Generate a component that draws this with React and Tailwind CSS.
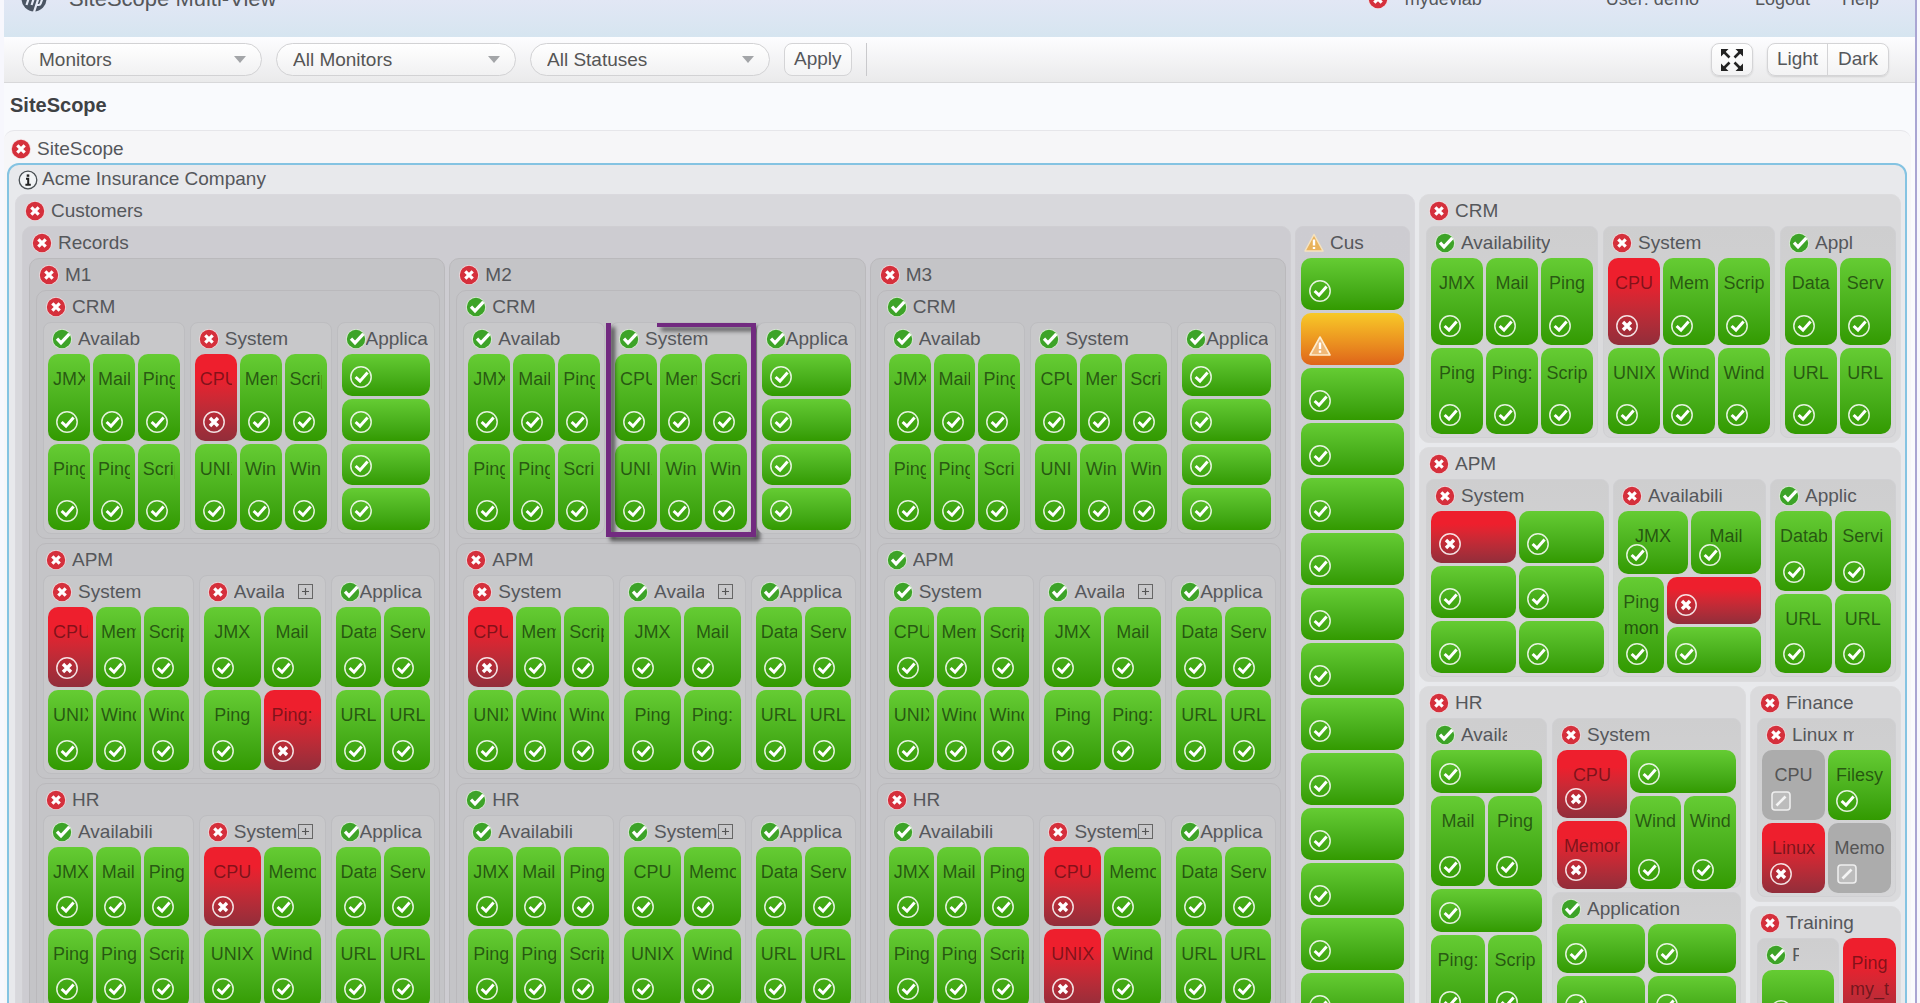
import React from "react";

/* ---------- icons ---------- */

function BadgeError() {
  return (
    <svg viewBox="0 0 20 20" className="size-5 shrink-0" aria-hidden="true">
      <circle cx="10" cy="10" r="10" fill="#f3dcdf" />
      <circle cx="10" cy="10" r="9.2" fill="#d5303c" />
      <path d="M6.3 6.3l7.4 7.4M13.7 6.3l-7.4 7.4" stroke="#fff" strokeWidth="3.2" />
    </svg>
  );
}

function BadgeGood() {
  return (
    <svg viewBox="0 0 20 20" className="size-5 shrink-0" aria-hidden="true">
      <circle cx="10" cy="10" r="10" fill="#dcefd6" />
      <circle cx="10" cy="10" r="9.2" fill="#3da328" />
      <path d="M5 9.6l4 4.2 8.4-9" fill="none" stroke="#fff" strokeWidth="3.2" />
    </svg>
  );
}

function BadgeWarning() {
  return (
    <svg viewBox="0 0 20 20" className="size-5 shrink-0" aria-hidden="true">
      <path d="M10 1.5L19 18H1z" fill="#e9b35c" stroke="#f6e3bf" strokeWidth="1.5" strokeLinejoin="round" />
      <path d="M10 6.5v6M10 14v2" stroke="#fff" strokeWidth="2.4" />
    </svg>
  );
}

function BadgeInfo() {
  return (
    <svg viewBox="0 0 20 20" className="size-5 shrink-0" aria-hidden="true">
      <circle cx="10" cy="10" r="8.8" fill="#f2f4f6" stroke="#4a5054" strokeWidth="1.3" />
      <path d="M10 4.4v2.4" stroke="#222" strokeWidth="2.6" />
      <path d="M8 8.8h2.2v5.4M7.4 14.8h5.4" fill="none" stroke="#222" strokeWidth="2" />
    </svg>
  );
}

const BADGES = { bad: BadgeError, ok: BadgeGood, warn: BadgeWarning, info: BadgeInfo };

function TileIcon({ status }) {
  if (status === "warn") {
    return (
      <svg viewBox="0 0 22 22" className="mt-auto ml-2 size-[22px] shrink-0" aria-hidden="true">
        <path d="M11 2L21 20H1z" fill="#f0b877" stroke="#fdeccd" strokeWidth="1.6" strokeLinejoin="round" />
        <path d="M11 7.5v6.5M11 15.6v2.2" stroke="#fff" strokeWidth="2.4" />
      </svg>
    );
  }
  if (status === "off") {
    return (
      <svg viewBox="0 0 22 22" className="mt-auto ml-2 size-[22px] shrink-0" aria-hidden="true">
        <rect x="2" y="2" width="18" height="18" rx="3" fill="#bcbcbc" stroke="#eee" strokeWidth="1.6" />
        <path d="M6.5 15.5l9-9" stroke="#f4f4f4" strokeWidth="2.6" />
      </svg>
    );
  }
  return (
    <svg viewBox="0 0 22 22" className="mt-auto ml-2 size-[22px] shrink-0" aria-hidden="true">
      <circle cx="11" cy="11" r="10.2" fill="none" stroke="#fff" strokeOpacity="0.85" strokeWidth="1.5" />
      {status === "bad" ? (
        <path d="M7 7l8 8M15 7l-8 8" stroke="#fff" strokeWidth="3.4" />
      ) : (
        <path d="M5.6 11l4.4 4.2 7.6-8.8" fill="none" stroke="#fff" strokeWidth="3" />
      )}
    </svg>
  );
}

/* ---------- monitor tiles ---------- */

const TILE_STYLES = {
  ok: "bg-linear-to-b from-[#65cc33] to-[#329a00] text-black/55",
  bad: "bg-linear-to-b from-[#ee1f2d] from-25% to-[#922d3a] text-black/45",
  warn: "bg-linear-to-b from-[#f7c928] to-[#de641a] text-black/55",
  off: "bg-[#acacac] text-[#555]",
};

function Tile({ label, status = "ok", wrap = false, className = "" }) {
  return (
    <div className={`flex min-h-0 min-w-0 flex-col overflow-hidden rounded-[10px] pb-2 text-lg ${TILE_STYLES[status]} ${className}`}>
      {label && (
        <div className={`mx-[5px] mt-3 overflow-hidden text-center leading-[26px] ${wrap ? "shrink-0" : "whitespace-nowrap"}`}>
          {label}
        </div>
      )}
      <TileIcon status={status} />
    </div>
  );
}

/* A leading "!" in a tile name marks it as failing. */
function tiles(names) {
  return names.map((name, i) => {
    const bad = name.startsWith("!");
    return <Tile key={i} label={bad ? name.slice(1) : name} status={bad ? "bad" : "ok"} />;
  });
}

/* ---------- panels ---------- */

function PanelHeader({ status, title, clip = "", tight = false, expand = false, className = "" }) {
  const Badge = BADGES[status];
  return (
    <div className={`flex h-[31px] items-center ${className}`}>
      <Badge />
      <div className={`overflow-hidden whitespace-nowrap leading-[26px] ${tight ? "" : "ml-[6px]"} ${clip}`}>{title}</div>
      {expand && (
        <button type="button" aria-label={`Expand ${title}`} className="mr-2 ml-auto grid size-[15px] shrink-0 place-items-center border border-[#666]">
          <svg viewBox="0 0 9 9" className="size-[9px]" aria-hidden="true">
            <path d="M4.5 1v7M1 4.5h7" stroke="#555" strokeWidth="1.2" />
          </svg>
        </button>
      )}
    </div>
  );
}

function Panel({ status, title, tone, className = "", children }) {
  return (
    <section className={`min-w-0 rounded-[10px] border pr-1 pb-1 pl-[6px] ${tone} ${className}`}>
      <PanelHeader status={status} title={title} className="pl-[3px]" />
      {children}
    </section>
  );
}

const DEEP = "border-[#bab9bc] bg-[#c4c4c7]";
const DEEP_LEAF = "border-[#bdbdc0] bg-[#c8c8ca]";
const PALE = "border-[#dcdcde] bg-[#dadadc]";
const PALE_LEAF = "border-[#d0d0d3] bg-linear-to-b from-[#cececf] to-[#d6d6d8]";

function Leaf({ status = "ok", title, tone = DEEP_LEAF, clip, tight, expand, body, overlay, className = "", children }) {
  return (
    <section className={`relative min-w-0 rounded-[8px] border px-1 pb-[3px] ${tone} ${className}`}>
      <PanelHeader status={status} title={title} clip={clip} tight={tight} expand={expand} className="pl-1" />
      <div className={`gap-[3px] ${body}`}>{children}</div>
      {overlay}
    </section>
  );
}

function Highlight() {
  return (
    <div className="pointer-events-none absolute top-0 -right-[5px] -bottom-1 -left-[5px] border-[5px] border-t-0 border-[#722a80] drop-shadow-[4px_4px_2px_rgba(0,0,0,0.6)]">
      <div className="absolute -right-[5px] top-0 left-[46px] h-1 bg-[#722a80]" />
    </div>
  );
}

/* ---------- company column (M1, M2, M3) ---------- */

function Company({ name, crm, apm, hr }) {
  return (
    <Panel status="bad" title={name} tone={DEEP}>
      <div className="flex flex-col gap-1">
        <Panel status={crm.status} title="CRM" tone={DEEP}>
          <div className="grid grid-cols-[142fr_142fr_99fr] gap-[5px]">
            <Leaf title="Availab" body="grid h-[176px] auto-rows-fr grid-cols-3">
              {tiles(["JMX", "Mail", "Ping", "Ping", "Ping", "Script"])}
            </Leaf>
            <Leaf
              title="System"
              status={crm.status}
              body="grid h-[176px] auto-rows-fr grid-cols-3"
              overlay={crm.highlight && <Highlight />}
            >
              {tiles([crm.cpu, "Mem", "Script", "UNIX", "Win", "Win"])}
            </Leaf>
            <Leaf title="Applica" tight body="grid h-[176px] auto-rows-fr">
              {tiles(["", "", "", ""])}
            </Leaf>
          </div>
        </Panel>

        <Panel status={apm.status} title="APM" tone={DEEP}>
          <div className="grid grid-cols-[151fr_127fr_105fr] gap-[5px]">
            <Leaf title="System" status={apm.status} body="grid h-[163px] auto-rows-fr grid-cols-3">
              {tiles([apm.cpu, "Mem", "Script", "UNIX", "Wind", "Wind"])}
            </Leaf>
            <Leaf title="Availab" status={apm.avail} clip="w-[50px]" expand body="grid h-[163px] auto-rows-fr grid-cols-2">
              {tiles(["JMX", "Mail", "Ping", apm.ping])}
            </Leaf>
            <Leaf title="Applica" tight body="grid h-[163px] auto-rows-fr grid-cols-2">
              {tiles(["Data", "Serv", "URL", "URL"])}
            </Leaf>
          </div>
        </Panel>

        <Panel status={hr.status} title="HR" tone={DEEP}>
          <div className="grid grid-cols-[151fr_127fr_105fr] gap-[5px]">
            <Leaf title="Availabili" body="grid h-[161px] auto-rows-fr grid-cols-3">
              {tiles(["JMX", "Mail", "Ping", "Ping", "Ping", "Script"])}
            </Leaf>
            <Leaf title="System" status={hr.system} expand body="grid h-[161px] auto-rows-fr grid-cols-2">
              {tiles([hr.cpu, "Memo", hr.unix, "Wind"])}
            </Leaf>
            <Leaf title="Applica" tight body="grid h-[161px] auto-rows-fr grid-cols-2">
              {tiles(["Data", "Serv", "URL", "URL"])}
            </Leaf>
          </div>
        </Panel>
      </div>
    </Panel>
  );
}

const COMPANIES = [
  {
    name: "M1",
    crm: { status: "bad", cpu: "!CPU" },
    apm: { status: "bad", cpu: "!CPU", avail: "bad", ping: "!Ping:" },
    hr: { status: "bad", system: "bad", cpu: "!CPU", unix: "UNIX" },
  },
  {
    name: "M2",
    crm: { status: "ok", cpu: "CPU", highlight: true },
    apm: { status: "bad", cpu: "!CPU", avail: "ok", ping: "Ping:" },
    hr: { status: "ok", system: "ok", cpu: "CPU", unix: "UNIX" },
  },
  {
    name: "M3",
    crm: { status: "ok", cpu: "CPU" },
    apm: { status: "ok", cpu: "CPU", avail: "ok", ping: "Ping:" },
    hr: { status: "bad", system: "bad", cpu: "!CPU", unix: "!UNIX" },
  },
];

/* ---------- right-hand side ---------- */

function SideColumn() {
  return (
    <div className="flex min-w-0 flex-col gap-1">
      <Panel status="bad" title="CRM" tone={PALE}>
        <div className="grid grid-cols-[172fr_172fr_116fr] gap-[5px]">
          <Leaf title="Availability" tone={PALE_LEAF} body="grid h-[176px] auto-rows-fr grid-cols-3">
            {tiles(["JMX", "Mail", "Ping", "Ping", "Ping:", "Scrip"])}
          </Leaf>
          <Leaf title="System" status="bad" tone={PALE_LEAF} body="grid h-[176px] auto-rows-fr grid-cols-3">
            {tiles(["!CPU", "Mem", "Scrip", "UNIX", "Wind", "Wind"])}
          </Leaf>
          <Leaf title="Appl" tone={PALE_LEAF} body="grid h-[176px] auto-rows-fr grid-cols-2">
            {tiles(["Data", "Serv", "URL", "URL"])}
          </Leaf>
        </div>
      </Panel>

      <Panel status="bad" title="APM" tone={PALE}>
        <div className="grid grid-cols-[183fr_153fr_126fr] gap-1">
          <Leaf title="System" status="bad" tone={PALE_LEAF} body="grid h-[162px] auto-rows-fr grid-cols-2">
            <Tile status="bad" />
            {tiles(["", "", "", "", ""])}
          </Leaf>
          <Leaf title="Availabili" status="bad" tone={PALE_LEAF} body="flex h-[162px] flex-col">
            <div className="grid h-[63px] grid-cols-2 gap-[3px]">{tiles(["JMX", "Mail"])}</div>
            <div className="grid flex-1 grid-cols-[46fr_93fr] gap-[3px]">
              <Tile label="Ping mon" wrap />
              <div className="grid auto-rows-fr gap-[3px]">
                <Tile status="bad" />
                <Tile />
              </div>
            </div>
          </Leaf>
          <Leaf title="Applic" tone={PALE_LEAF} body="grid h-[162px] auto-rows-fr grid-cols-2">
            {tiles(["Datab", "Servi", "URL", "URL"])}
          </Leaf>
        </div>
      </Panel>

      <div className="grid grid-cols-[327fr_151fr] gap-1">
        <Panel status="bad" title="HR" tone={PALE}>
          <div className="grid grid-cols-[121fr_189fr] gap-[5px]">
            <Leaf title="Availab" clip="w-[46px]" tone={PALE_LEAF} body="flex flex-col">
              <Tile className="h-[43px]" />
              <div className="grid h-[90px] grid-cols-2 gap-[3px]">{tiles(["Mail", "Ping"])}</div>
              <Tile className="h-[43px]" />
              <div className="grid h-[86px] grid-cols-2 gap-[3px]">{tiles(["Ping:", "Scrip"])}</div>
            </Leaf>
            <div className="flex min-w-0 flex-col gap-1">
              <Leaf title="System" status="bad" tone={PALE_LEAF} body="grid h-[134px] grid-cols-[69fr_105fr]">
                <div className="grid auto-rows-fr gap-[3px]">{tiles(["!CPU", "!Memor"])}</div>
                <div className="flex flex-col gap-[3px]">
                  <Tile className="h-[43px]" />
                  <div className="grid flex-1 grid-cols-2 gap-[3px]">{tiles(["Wind", "Wind"])}</div>
                </div>
              </Leaf>
              <Leaf title="Application" tone={PALE_LEAF} body="grid h-[100px] auto-rows-fr grid-cols-2">
                {tiles(["", "", "", ""])}
              </Leaf>
            </div>
          </div>
        </Panel>

        <div className="flex min-w-0 flex-col gap-1">
          <Panel status="bad" title="Finance" tone={PALE}>
            <Leaf title="Linux m" status="bad" clip="w-[62px]" tone={PALE_LEAF} body="grid h-[143px] auto-rows-fr grid-cols-2">
              <Tile label="CPU" status="off" />
              <Tile label="Filesy" />
              <Tile label="Linux" status="bad" />
              <Tile label="Memo" status="off" />
            </Leaf>
          </Panel>
          <Panel status="bad" title="Training" tone={PALE}>
            <div className="grid grid-cols-[82fr_53fr] gap-1">
              <Leaf title="P" clip="w-[7px]" tone={PALE_LEAF} body="grid">
                <Tile className="h-[60px]" />
              </Leaf>
              <Tile label="Ping my_t" status="bad" wrap />
            </div>
          </Panel>
        </div>
      </div>
    </div>
  );
}

/* ---------- page chrome ---------- */

function Dropdown({ label }) {
  return (
    <div className="relative">
      <select
        aria-label={label}
        className="h-[33px] w-60 appearance-none rounded-full border border-[#d2d2d4] bg-linear-to-b from-white to-[#f1f1f2] pr-10 pl-4 text-[19px] leading-[26px] text-[#555]"
      >
        <option>{label}</option>
      </select>
      <svg viewBox="0 0 12 7" className="pointer-events-none absolute top-[13px] right-4 h-[7px] w-3" aria-hidden="true">
        <path d="M0 0h12L6 7z" fill="#a3a5a8" />
      </svg>
    </div>
  );
}

const BUTTON = "border border-[#d4d4d6] bg-linear-to-b from-white to-[#f3f3f4] shadow-[0_1px_2px_rgba(0,0,0,0.12)]";

export default function App() {
  return (
    <div className="h-screen overflow-hidden bg-[#f7f7fd] pr-[3px] pl-1 font-['Liberation_Sans',Arial,sans-serif] text-[19px] text-[#55575b]">
      <div className="min-h-full border-r-2 border-[#a9a5d3] bg-[#f9fafd]">
        <header className="h-[37px] overflow-hidden bg-linear-to-b from-[#e2e7f5] to-[#d6e5f0]">
          <div className="-mt-[14px] flex h-[26px] items-center pr-9 pl-[17px] text-lg">
            <svg viewBox="0 0 26 26" className="size-[26px]" aria-label="HP">
              <circle cx="13" cy="13" r="12.5" fill="#4b5563" />
              <path d="M11.5 1L5.5 19M8.5 10h3.6q1.4 0 1 1.4L10.6 19M13 26l5.2-16h2.4q1.6 0 1.1 1.5l-2 6q-.5 1.5-2 1.5h-2" fill="none" stroke="#e6ebf6" strokeWidth="2.2" />
            </svg>
            <h1 className="ml-[22px] text-[22px] leading-[26px]">SiteScope Multi-View</h1>
            <div className="ml-auto flex items-center gap-[17px]">
              <BadgeError />
              <span>mydevlab</span>
            </div>
            <span className="ml-[124px]">User: demo</span>
            <a href="#logout" className="ml-14">Logout</a>
            <a href="#help" className="ml-8">Help</a>
          </div>
        </header>

        <div className="flex h-[46px] items-center border-b border-[#d8d8da] bg-linear-to-b from-[#fdfdff] to-[#eaeaeb] pr-[26px] pl-[18px]">
          <div className="flex gap-[14px]">
            <Dropdown label="Monitors" />
            <Dropdown label="All Monitors" />
            <Dropdown label="All Statuses" />
            <button type="button" className="h-[33px] rounded-lg border border-[#d4d4d6] bg-linear-to-b from-white to-[#f3f3f4] px-[9px]">Apply</button>
            <div className="h-[33px] border-l border-[#c9c9cc]" />
          </div>
          <button type="button" aria-label="Full screen" className={`ml-auto grid h-[33px] w-[42px] place-items-center rounded-lg ${BUTTON}`}>
            <svg viewBox="0 0 24 24" className="size-6" fill="#222" stroke="#222" aria-hidden="true">
              <path d="M1 1h7.5L1 8.500zM23 1v7.500L15.500 1zM1 23v-7.500L8.500 23zM23 23h-7.500l7.500-7.500z" stroke="none" />
              <path d="M4 4l5.500 5.500M20 4l-5.500 5.500M4 20l5.500-5.500M20 20l-5.500-5.500" strokeWidth="2.600" />
            </svg>
          </button>
          <div className={`ml-[14px] flex h-[33px] rounded-lg ${BUTTON}`}>
            <button type="button" className="w-[60px] border-r border-[#d4d4d6]">Light</button>
            <button type="button" className="w-[60px]">Dark</button>
          </div>
        </div>

        <h2 className="h-[47px] px-[6px] pt-[9px] text-[20px] leading-[26px] font-bold text-[#3f4144]">SiteScope</h2>

        <main className="mr-1 rounded-t-[10px] border-t border-[#e6e6ea] bg-[#f6f6f8] pr-1 pl-[3px]">
          <PanelHeader status="bad" title="SiteScope" className="pt-1 pl-1" />
          <section className="mt-px rounded-[12px] border-2 border-[#84c3e2] bg-[#e8e9ec] pr-1 pb-[5px] pl-[6px]">
            <div className="flex h-[29px] items-center gap-1 pl-[3px]">
              <BadgeInfo />
              <span>Acme Insurance Company</span>
            </div>
            <div className="grid grid-cols-[1400fr_482fr] gap-1">
              <Panel status="bad" title="Customers" tone="border-[#dad9de] bg-[#d8d8dc]">
                <div className="grid grid-cols-[1269fr_115fr] gap-1">
                  <Panel status="bad" title="Records" tone="border-[#cfced2] bg-[#cdccd1]">
                    <div className="grid grid-cols-3 gap-1">
                      {COMPANIES.map((company) => (
                        <Company key={company.name} {...company} />
                      ))}
                    </div>
                  </Panel>
                  <Leaf
                    title="Cus"
                    status="warn"
                    tone="border-[#cfced2] bg-linear-to-b from-[#cdccd1] to-[#d2d2d5]"
                    body="flex flex-col px-px"
                  >
                    {Array.from({ length: 14 }, (_, i) => (
                      <Tile key={i} status={i === 1 ? "warn" : "ok"} className="h-[52px]" />
                    ))}
                  </Leaf>
                </div>
              </Panel>
              <SideColumn />
            </div>
          </section>
        </main>
      </div>
    </div>
  );
}
